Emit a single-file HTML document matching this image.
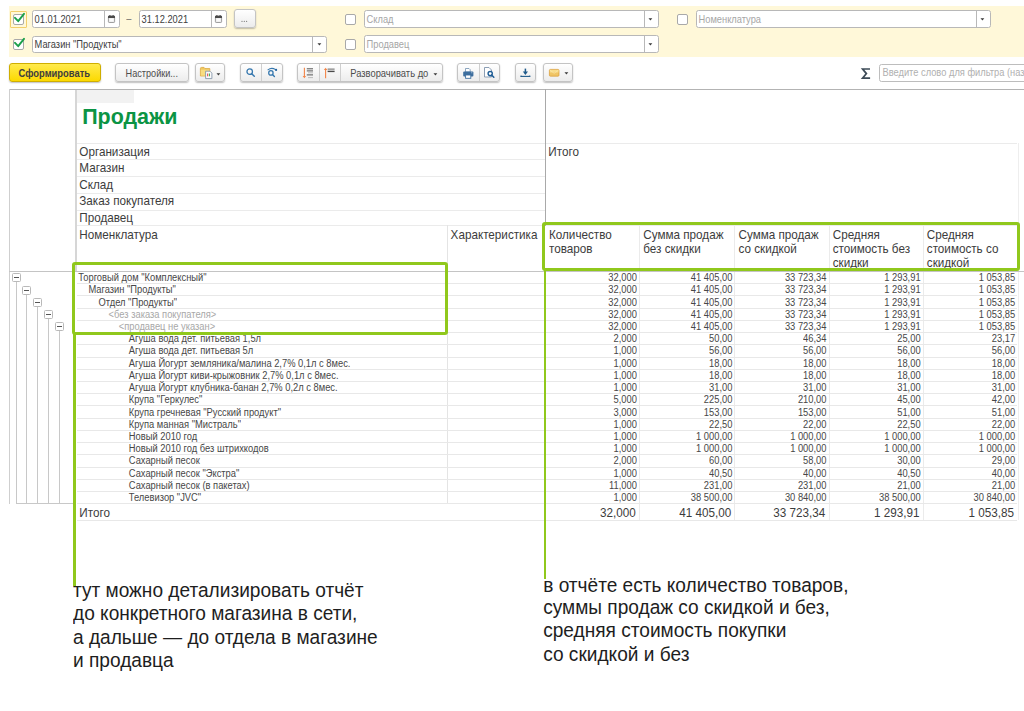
<!DOCTYPE html><html><head><meta charset="utf-8"><style>
html,body{margin:0;padding:0;width:1024px;height:711px;overflow:hidden;background:#fff;font-family:"Liberation Sans", sans-serif;}
.btn{position:absolute;box-sizing:border-box;border:1px solid #c4c4c4;border-radius:3px;background:linear-gradient(#ffffff,#ececec);box-shadow:0 1px 1.5px rgba(0,0,0,0.25);}
.inp{position:absolute;box-sizing:border-box;border:1px solid #b8b8b8;border-radius:2.5px;background:#fff;}
.cb{position:absolute;box-sizing:border-box;border:1px solid #a9a9a9;border-radius:2px;background:#fff;}
svg{position:absolute;overflow:visible}
</style></head><body>
<div style="position:absolute;left:9px;top:5.5px;width:1015px;height:51.5px;background:#fff8d9"></div>
<div style="position:absolute;left:10px;top:11px;width:17px;height:16.5px;box-sizing:border-box;border:1px solid #f2cf6b;border-radius:1px"></div>
<div class="cb" style="left:13px;top:13.5px;width:11px;height:11px"></div>
<svg style="left:14.2px;top:12.8px" width="12" height="10" viewBox="0 0 12 10"><path d="M1 4.8 L4.2 8.2 L10 0.8" fill="none" stroke="#1aa04a" stroke-width="1.9" stroke-linecap="round" stroke-linejoin="round"/></svg>
<div class="cb" style="left:13px;top:38.5px;width:11px;height:11px"></div>
<svg style="left:14.2px;top:37.8px" width="12" height="10" viewBox="0 0 12 10"><path d="M1 4.8 L4.2 8.2 L10 0.8" fill="none" stroke="#1aa04a" stroke-width="1.9" stroke-linecap="round" stroke-linejoin="round"/></svg>
<div class="inp" style="left:32px;top:10px;width:87.5px;height:18px"></div>
<div style="position:absolute;left:103.6px;top:10.5px;width:1.0px;height:17.0px;background:#b8b8b8"></div>
<svg style="left:107.95px;top:15px" width="7" height="8" viewBox="0 0 7 8"><rect x="0.4" y="1.2" width="6.2" height="6.3" rx="0.8" fill="#e2e2e2" stroke="#8a8a8a" stroke-width="0.8"/><rect x="1.3" y="3.4" width="4.4" height="3.2" fill="#fafafa"/><rect x="0" y="0.8" width="7" height="2.2" rx="0.6" fill="#4a4a4a"/><rect x="1.4" y="0" width="1" height="1.2" fill="#4a4a4a"/><rect x="4.6" y="0" width="1" height="1.2" fill="#4a4a4a"/></svg>
<div style="position:absolute;left:34.60px;top:15.93px;font-size:9.3px;line-height:1;color:#404040;font-weight:400;white-space:pre;transform:scaleY(1.2);transform-origin:0 7.87px;">01.01.2021</div>
<div style="position:absolute;left:126.20px;top:14.73px;font-size:9.3px;line-height:1;color:#555;font-weight:400;white-space:pre;transform:scaleY(1.07);transform-origin:0 7.87px;">–</div>
<div class="inp" style="left:139px;top:10px;width:87.5px;height:18px"></div>
<div style="position:absolute;left:211px;top:10.5px;width:1px;height:17.0px;background:#b8b8b8"></div>
<svg style="left:215.15px;top:15px" width="7" height="8" viewBox="0 0 7 8"><rect x="0.4" y="1.2" width="6.2" height="6.3" rx="0.8" fill="#e2e2e2" stroke="#8a8a8a" stroke-width="0.8"/><rect x="1.3" y="3.4" width="4.4" height="3.2" fill="#fafafa"/><rect x="0" y="0.8" width="7" height="2.2" rx="0.6" fill="#4a4a4a"/><rect x="1.4" y="0" width="1" height="1.2" fill="#4a4a4a"/><rect x="4.6" y="0" width="1" height="1.2" fill="#4a4a4a"/></svg>
<div style="position:absolute;left:141.60px;top:15.93px;font-size:9.3px;line-height:1;color:#404040;font-weight:400;white-space:pre;transform:scaleY(1.2);transform-origin:0 7.87px;">31.12.2021</div>
<div class="btn" style="left:234px;top:9.2px;width:21.5px;height:18.8px"></div>
<svg style="left:241px;top:20px" width="7" height="3" viewBox="0 0 7 3"><circle cx="1" cy="1.3" r="0.65" fill="#777"/><circle cx="3.3" cy="1.3" r="0.65" fill="#777"/><circle cx="5.6" cy="1.3" r="0.65" fill="#777"/></svg>
<div class="inp" style="left:32px;top:35.5px;width:295px;height:17.5px"></div>
<div style="position:absolute;left:311.5px;top:36.0px;width:1.0px;height:16.5px;background:#b8b8b8"></div>
<svg style="left:316.65px;top:43.05px" width="5" height="3" viewBox="0 0 5 3"><path d="M0.5 0.3 L4.3 0.3 L2.4 2.4 Z" fill="#3a3a3a"/></svg>
<div style="position:absolute;left:34.60px;top:40.93px;font-size:9.3px;line-height:1;color:#404040;font-weight:400;white-space:pre;transform:scaleY(1.2);transform-origin:0 7.87px;">Магазин &quot;Продукты&quot;</div>
<div class="cb" style="left:345px;top:14px;width:11px;height:11px"></div>
<div class="inp" style="left:364px;top:10.3px;width:294.5px;height:17.7px"></div>
<div style="position:absolute;left:643.5px;top:10.8px;width:1.0px;height:16.7px;background:#b8b8b8"></div>
<svg style="left:648.4px;top:17.95px" width="5" height="3" viewBox="0 0 5 3"><path d="M0.5 0.3 L4.3 0.3 L2.4 2.4 Z" fill="#3a3a3a"/></svg>
<div style="position:absolute;left:366.60px;top:15.73px;font-size:9.3px;line-height:1;color:#a6a6a6;font-weight:400;white-space:pre;transform:scaleY(1.2);transform-origin:0 7.87px;">Склад</div>
<div class="cb" style="left:345px;top:39px;width:11px;height:11px"></div>
<div class="inp" style="left:364px;top:35.3px;width:294.5px;height:17.700000000000003px"></div>
<div style="position:absolute;left:643.5px;top:35.8px;width:1.0px;height:16.700000000000003px;background:#b8b8b8"></div>
<svg style="left:648.4px;top:42.949999999999996px" width="5" height="3" viewBox="0 0 5 3"><path d="M0.5 0.3 L4.3 0.3 L2.4 2.4 Z" fill="#3a3a3a"/></svg>
<div style="position:absolute;left:366.60px;top:40.73px;font-size:9.3px;line-height:1;color:#a6a6a6;font-weight:400;white-space:pre;transform:scaleY(1.2);transform-origin:0 7.87px;">Продавец</div>
<div class="cb" style="left:677px;top:14px;width:11px;height:11px"></div>
<div class="inp" style="left:696px;top:10.3px;width:294.5px;height:17.7px"></div>
<div style="position:absolute;left:975.5px;top:10.8px;width:1.0px;height:16.7px;background:#b8b8b8"></div>
<svg style="left:980.4px;top:17.95px" width="5" height="3" viewBox="0 0 5 3"><path d="M0.5 0.3 L4.3 0.3 L2.4 2.4 Z" fill="#3a3a3a"/></svg>
<div style="position:absolute;left:698.60px;top:15.73px;font-size:9.3px;line-height:1;color:#a6a6a6;font-weight:400;white-space:pre;transform:scaleY(1.2);transform-origin:0 7.87px;">Номенклатура</div>
<div style="position:absolute;left:9px;top:63.3px;width:92px;height:18.5px;box-sizing:border-box;border:1px solid #cfae00;border-radius:3px;background:linear-gradient(#ffea4d,#fcd900);box-shadow:0 1px 1.5px rgba(0,0,0,0.25)"></div>
<div style="position:absolute;left:18.60px;top:70.16px;font-size:9.38px;line-height:1;color:#3d3d3d;font-weight:700;white-space:pre;transform:scaleY(1.12);transform-origin:0 7.94px;">Сформировать</div>
<div class="btn" style="left:115.3px;top:63.3px;width:73.5px;height:18.5px"></div>
<div style="position:absolute;left:125.60px;top:69.75px;font-size:9.15px;line-height:1;color:#4d4d4d;font-weight:400;white-space:pre;transform:scaleY(1.2);transform-origin:0 7.75px;">Настройки...</div>
<div class="btn" style="left:195.3px;top:63.3px;width:29.5px;height:18.5px"></div>
<svg style="left:199.8px;top:66.8px" width="13" height="13" viewBox="0 0 13 13">
<path d="M0.4 1.6 Q0.4 0.4 1.6 0.4 L4 0.4 L5 1.6 L9.8 1.6 L9.8 9 L0.4 9 Z" fill="#f0c75e" stroke="#dba73f" stroke-width="0.8"/>
<rect x="0.8" y="2.6" width="8.6" height="6" fill="#f8dc80"/>
<path d="M5.6 4.2 L10 4.2 L11.9 6.1 L11.9 11.6 L5.6 11.6 Z" fill="#fbfbfb" stroke="#8797aa" stroke-width="0.9" stroke-linejoin="round"/>
<rect x="7.1" y="6.5" width="1.1" height="2.8" fill="#e65050"/><rect x="8.9" y="6.5" width="1.1" height="2.8" fill="#4fb45a"/>
</svg>
<svg style="left:216px;top:72.5px" width="5" height="3" viewBox="0 0 5 3"><path d="M0.5 0.3 L4.3 0.3 L2.4 2.4 Z" fill="#3a3a3a"/></svg>
<div class="btn" style="left:240.3px;top:63.3px;width:42.5px;height:18.5px"></div>
<div style="position:absolute;left:261.3px;top:63.8px;width:1.0px;height:17.5px;background:#cfcfcf"></div>
<svg style="left:246px;top:68px" width="10" height="10" viewBox="0 0 10 10"><circle cx="3.7" cy="3.7" r="2.75" fill="none" stroke="#3577ae" stroke-width="1.25"/><path d="M5.7 5.7 L8.3 8.3" stroke="#3577ae" stroke-width="1.45" stroke-linecap="round"/></svg>
<svg style="left:267px;top:67px" width="11" height="11" viewBox="0 0 11 11"><path d="M0.9 2.8 Q4.6 0.1 8.6 2.6" fill="none" stroke="#3577ae" stroke-width="1.05" stroke-linecap="round"/><circle cx="9.1" cy="2.9" r="1.1" fill="#2565a0"/><circle cx="3.9" cy="5.9" r="2.2" fill="none" stroke="#3577ae" stroke-width="1.25"/><path d="M5.5 7.5 L7.4 9.4" stroke="#3577ae" stroke-width="1.4" stroke-linecap="round"/></svg>
<div class="btn" style="left:297.3px;top:63.3px;width:145.3px;height:18.5px"></div>
<div style="position:absolute;left:319.4px;top:63.8px;width:1.0px;height:17.5px;background:#cfcfcf"></div>
<div style="position:absolute;left:340.4px;top:63.8px;width:1.0px;height:17.5px;background:#cfcfcf"></div>
<svg style="left:302px;top:66.5px" width="12" height="12" viewBox="0 0 12 12"><path d="M2.4 0.7 L2.4 10" stroke="#f28447" stroke-width="1.1"/><path d="M0.7 8.9 L2.4 11.2 L4.1 8.9 Z" fill="#f28447"/><rect x="4.8" y="1.3" width="6.2" height="1" fill="#555"/><rect x="4.8" y="3.4" width="6.2" height="1" fill="#555"/><rect x="6" y="5.3" width="5" height="1" fill="#bbb"/><rect x="4.8" y="7.4" width="6.2" height="1" fill="#555"/><rect x="6" y="10.1" width="5" height="1" fill="#bbb"/></svg>
<svg style="left:322.5px;top:66.5px" width="12" height="12" viewBox="0 0 12 12"><path d="M2.6 2 L2.6 11.2" stroke="#f28447" stroke-width="1.1"/><path d="M0.9 3.1 L2.6 0.8 L4.3 3.1 Z" fill="#f28447"/><rect x="4.6" y="1.6" width="7" height="1" fill="#666"/><rect x="4.6" y="3.7" width="7" height="1.4" fill="#4a4a4a"/></svg>
<div style="position:absolute;left:350.20px;top:69.56px;font-size:9.38px;line-height:1;color:#4d4d4d;font-weight:400;white-space:pre;transform:scaleY(1.2);transform-origin:0 7.94px;">Разворачивать до</div>
<svg style="left:432.5px;top:72.6px" width="5" height="3" viewBox="0 0 5 3"><path d="M0.5 0.3 L4.3 0.3 L2.4 2.4 Z" fill="#3a3a3a"/></svg>
<div class="btn" style="left:457.2px;top:63.3px;width:43.2px;height:18.5px"></div>
<div style="position:absolute;left:479.2px;top:63.8px;width:1.0px;height:17.5px;background:#cfcfcf"></div>
<svg style="left:462.8px;top:67.6px" width="11" height="11" viewBox="0 0 11 11"><path d="M2.5 0.5 L6 0.5 L7.2 1.7 L7.2 4 L2.5 4 Z" fill="#fff" stroke="#6f8fb0" stroke-width="0.8"/><rect x="0.2" y="3.5" width="10.2" height="5" rx="1" fill="#3d6e9e"/><rect x="8" y="4.4" width="1.4" height="0.8" fill="#a9c2da"/><rect x="2.6" y="7" width="5.2" height="3.3" fill="#fff" stroke="#3d6e9e" stroke-width="0.9"/></svg>
<svg style="left:484px;top:67.2px" width="11" height="11" viewBox="0 0 11 11"><path d="M0.5 0.5 L5 0.5 L7.5 3 L7.5 10 L0.5 10 Z" fill="#fff" stroke="#7f94ad" stroke-width="0.9"/><circle cx="6.2" cy="6.6" r="2.1" fill="#fff" stroke="#1f5d96" stroke-width="1.4"/><path d="M7.6 8 L9.8 10.2" stroke="#1f5d96" stroke-width="1.6" stroke-linecap="round"/></svg>
<div class="btn" style="left:515.4px;top:63.3px;width:20.8px;height:18.5px"></div>
<svg style="left:520px;top:67.6px" width="11" height="10" viewBox="0 0 11 10"><path d="M5.4 0.6 L5.4 4.8" stroke="#1f5a8a" stroke-width="1.5"/><path d="M2.8 3.6 L5.4 6.9 L8 3.6 Z" fill="#1f5a8a"/><path d="M1 8.4 L9.8 8.4" stroke="#1f5a8a" stroke-width="1.1"/><circle cx="1" cy="8.2" r="0.8" fill="#1f5a8a"/><circle cx="9.8" cy="8.2" r="0.8" fill="#1f5a8a"/></svg>
<div class="btn" style="left:543.4px;top:63.3px;width:29.3px;height:18.5px"></div>
<svg style="left:548.6px;top:69px" width="11" height="8" viewBox="0 0 11 8"><rect x="0.4" y="0.4" width="9.6" height="6.8" rx="1" fill="#f0c565" stroke="#d89b36" stroke-width="0.7"/><rect x="0.9" y="0.9" width="8.6" height="2.6" fill="#f8dc8a"/><path d="M1 1.2 L5.2 4.3 L9.4 1.2" fill="none" stroke="#fbe7b0" stroke-width="0.6"/></svg>
<svg style="left:563.9px;top:72.4px" width="5" height="3" viewBox="0 0 5 3"><path d="M0.5 0.3 L4.3 0.3 L2.4 2.4 Z" fill="#3a3a3a"/></svg>
<svg style="left:861px;top:67px" width="10" height="13" viewBox="0 0 10 13"><path d="M9 2 L1.6 2 L5.4 6.6 L1.6 11.1 L9.1 11.1" fill="none" stroke="#3d4b57" stroke-width="1.7" stroke-linejoin="miter"/></svg>
<div class="inp" style="left:879.2px;top:64px;width:160px;height:17.5px;border-color:#bdbdbd"></div>
<div style="position:absolute;left:882.50px;top:69.03px;font-size:9.3px;line-height:1;color:#b0b0b0;font-weight:400;white-space:pre;transform:scaleY(1.2);transform-origin:0 7.87px;">Введите слово для фильтра (наз</div>
<div style="position:absolute;left:9px;top:89px;width:1015px;height:1px;background:#b3b3b3"></div>
<div style="position:absolute;left:9px;top:89px;width:1px;height:415px;background:#cfcfcf"></div>
<div style="position:absolute;left:75.2px;top:90px;width:1.5999999999999943px;height:181px;background:#d6d6d6"></div>
<div style="position:absolute;left:76.8px;top:90px;width:57.39999999999999px;height:12.799999999999997px;background:#f2f2f2"></div>
<div style="position:absolute;left:82.20px;top:107.04px;font-size:21.45px;line-height:1;color:#0b9444;font-weight:700;white-space:pre;transform:scaleY(1.06);transform-origin:0 18.16px;">Продажи</div>
<div style="position:absolute;left:76.8px;top:142.6px;width:940.7px;height:1.0px;background:#ebebeb"></div>
<div style="position:absolute;left:76.8px;top:225.4px;width:940.7px;height:1.0px;background:#ebebeb"></div>
<div style="position:absolute;left:76.8px;top:159.3px;width:468.7px;height:1.0px;background:#ebebeb"></div>
<div style="position:absolute;left:76.8px;top:176.2px;width:468.7px;height:1.0px;background:#ebebeb"></div>
<div style="position:absolute;left:76.8px;top:192.6px;width:468.7px;height:1.0px;background:#ebebeb"></div>
<div style="position:absolute;left:76.8px;top:209.5px;width:468.7px;height:1.0px;background:#ebebeb"></div>
<div style="position:absolute;left:545px;top:89px;width:1px;height:137px;background:#a9a9a9"></div>
<div style="position:absolute;left:1017.5px;top:142.6px;width:1.0px;height:377.9px;background:#eeeeee"></div>
<div style="position:absolute;left:79.30px;top:145.80px;font-size:11.7px;line-height:1;color:#3c3c3c;font-weight:400;white-space:pre;transform:scaleY(1.07);transform-origin:0 9.90px;">Организация</div>
<div style="position:absolute;left:79.30px;top:162.35px;font-size:11.7px;line-height:1;color:#3c3c3c;font-weight:400;white-space:pre;transform:scaleY(1.07);transform-origin:0 9.90px;">Магазин</div>
<div style="position:absolute;left:79.30px;top:178.90px;font-size:11.7px;line-height:1;color:#3c3c3c;font-weight:400;white-space:pre;transform:scaleY(1.07);transform-origin:0 9.90px;">Склад</div>
<div style="position:absolute;left:79.30px;top:195.45px;font-size:11.7px;line-height:1;color:#3c3c3c;font-weight:400;white-space:pre;transform:scaleY(1.07);transform-origin:0 9.90px;">Заказ покупателя</div>
<div style="position:absolute;left:79.30px;top:212.00px;font-size:11.7px;line-height:1;color:#3c3c3c;font-weight:400;white-space:pre;transform:scaleY(1.07);transform-origin:0 9.90px;">Продавец</div>
<div style="position:absolute;left:79.30px;top:228.55px;font-size:11.7px;line-height:1;color:#3c3c3c;font-weight:400;white-space:pre;transform:scaleY(1.07);transform-origin:0 9.90px;">Номенклатура</div>
<div style="position:absolute;left:548.30px;top:145.80px;font-size:11.7px;line-height:1;color:#3c3c3c;font-weight:400;white-space:pre;transform:scaleY(1.07);transform-origin:0 9.90px;">Итого</div>
<div style="position:absolute;left:447.3px;top:225.4px;width:1.0px;height:278.6px;background:#e4e4e4"></div>
<div style="position:absolute;left:450.60px;top:229.00px;font-size:11.7px;line-height:1;color:#3c3c3c;font-weight:400;white-space:pre;transform:scaleY(1.07);transform-origin:0 9.90px;">Характеристика</div>
<div style="position:absolute;left:549.00px;top:228.50px;font-size:11.7px;line-height:1;color:#3c3c3c;font-weight:400;white-space:pre;transform:scaleY(1.07);transform-origin:0 9.90px;">Количество</div>
<div style="position:absolute;left:549.00px;top:242.60px;font-size:11.7px;line-height:1;color:#3c3c3c;font-weight:400;white-space:pre;transform:scaleY(1.07);transform-origin:0 9.90px;">товаров</div>
<div style="position:absolute;left:643.30px;top:228.50px;font-size:11.7px;line-height:1;color:#3c3c3c;font-weight:400;white-space:pre;transform:scaleY(1.07);transform-origin:0 9.90px;">Сумма продаж</div>
<div style="position:absolute;left:643.30px;top:242.60px;font-size:11.7px;line-height:1;color:#3c3c3c;font-weight:400;white-space:pre;transform:scaleY(1.07);transform-origin:0 9.90px;">без скидки</div>
<div style="position:absolute;left:738.50px;top:228.50px;font-size:11.7px;line-height:1;color:#3c3c3c;font-weight:400;white-space:pre;transform:scaleY(1.07);transform-origin:0 9.90px;">Сумма продаж</div>
<div style="position:absolute;left:738.50px;top:242.60px;font-size:11.7px;line-height:1;color:#3c3c3c;font-weight:400;white-space:pre;transform:scaleY(1.07);transform-origin:0 9.90px;">со скидкой</div>
<div style="position:absolute;left:832.70px;top:228.50px;font-size:11.7px;line-height:1;color:#3c3c3c;font-weight:400;white-space:pre;transform:scaleY(1.07);transform-origin:0 9.90px;">Средняя</div>
<div style="position:absolute;left:832.70px;top:242.60px;font-size:11.7px;line-height:1;color:#3c3c3c;font-weight:400;white-space:pre;transform:scaleY(1.07);transform-origin:0 9.90px;">стоимость без</div>
<div style="position:absolute;left:832.70px;top:256.70px;font-size:11.7px;line-height:1;color:#3c3c3c;font-weight:400;white-space:pre;transform:scaleY(1.07);transform-origin:0 9.90px;">скидки</div>
<div style="position:absolute;left:926.80px;top:228.50px;font-size:11.7px;line-height:1;color:#3c3c3c;font-weight:400;white-space:pre;transform:scaleY(1.07);transform-origin:0 9.90px;">Средняя</div>
<div style="position:absolute;left:926.80px;top:242.60px;font-size:11.7px;line-height:1;color:#3c3c3c;font-weight:400;white-space:pre;transform:scaleY(1.07);transform-origin:0 9.90px;">стоимость со</div>
<div style="position:absolute;left:926.80px;top:256.70px;font-size:11.7px;line-height:1;color:#3c3c3c;font-weight:400;white-space:pre;transform:scaleY(1.07);transform-origin:0 9.90px;">скидкой</div>
<div style="position:absolute;left:639px;top:225.4px;width:1px;height:295.1px;background:#ebebeb"></div>
<div style="position:absolute;left:734px;top:225.4px;width:1px;height:295.1px;background:#ebebeb"></div>
<div style="position:absolute;left:829px;top:225.4px;width:1px;height:295.1px;background:#ebebeb"></div>
<div style="position:absolute;left:923px;top:225.4px;width:1px;height:295.1px;background:#ebebeb"></div>
<div style="position:absolute;left:9px;top:271px;width:1015px;height:1px;background:#c4c4c4"></div>
<div style="position:absolute;left:78.30px;top:274.09px;font-size:9.35px;line-height:1;color:#474747;font-weight:400;white-space:pre;transform:scaleY(1.07);transform-origin:0 7.91px;">Торговый дом &quot;Комплексный&quot;</div>
<div style="position:absolute;left:236.90px;width:400px;text-align:right;top:274.09px;font-size:9.35px;line-height:1;color:#474747;font-weight:400;white-space:pre;transform:scaleY(1.07);transform-origin:0 7.91px;">32,000</div>
<div style="position:absolute;left:332.40px;width:400px;text-align:right;top:274.09px;font-size:9.35px;line-height:1;color:#474747;font-weight:400;white-space:pre;transform:scaleY(1.07);transform-origin:0 7.91px;">41 405,00</div>
<div style="position:absolute;left:426.50px;width:400px;text-align:right;top:274.09px;font-size:9.35px;line-height:1;color:#474747;font-weight:400;white-space:pre;transform:scaleY(1.07);transform-origin:0 7.91px;">33 723,34</div>
<div style="position:absolute;left:520.60px;width:400px;text-align:right;top:274.09px;font-size:9.35px;line-height:1;color:#474747;font-weight:400;white-space:pre;transform:scaleY(1.07);transform-origin:0 7.91px;">1 293,91</div>
<div style="position:absolute;left:615.20px;width:400px;text-align:right;top:274.09px;font-size:9.35px;line-height:1;color:#474747;font-weight:400;white-space:pre;transform:scaleY(1.07);transform-origin:0 7.91px;">1 053,85</div>
<div style="position:absolute;left:76.8px;top:283.2263157894737px;width:940.7px;height:1.0px;background:#e8e8e8"></div>
<div style="position:absolute;left:88.40px;top:286.31px;font-size:9.35px;line-height:1;color:#474747;font-weight:400;white-space:pre;transform:scaleY(1.07);transform-origin:0 7.91px;">Магазин &quot;Продукты&quot;</div>
<div style="position:absolute;left:236.90px;width:400px;text-align:right;top:286.31px;font-size:9.35px;line-height:1;color:#474747;font-weight:400;white-space:pre;transform:scaleY(1.07);transform-origin:0 7.91px;">32,000</div>
<div style="position:absolute;left:332.40px;width:400px;text-align:right;top:286.31px;font-size:9.35px;line-height:1;color:#474747;font-weight:400;white-space:pre;transform:scaleY(1.07);transform-origin:0 7.91px;">41 405,00</div>
<div style="position:absolute;left:426.50px;width:400px;text-align:right;top:286.31px;font-size:9.35px;line-height:1;color:#474747;font-weight:400;white-space:pre;transform:scaleY(1.07);transform-origin:0 7.91px;">33 723,34</div>
<div style="position:absolute;left:520.60px;width:400px;text-align:right;top:286.31px;font-size:9.35px;line-height:1;color:#474747;font-weight:400;white-space:pre;transform:scaleY(1.07);transform-origin:0 7.91px;">1 293,91</div>
<div style="position:absolute;left:615.20px;width:400px;text-align:right;top:286.31px;font-size:9.35px;line-height:1;color:#474747;font-weight:400;white-space:pre;transform:scaleY(1.07);transform-origin:0 7.91px;">1 053,85</div>
<div style="position:absolute;left:76.8px;top:295.4526315789474px;width:940.7px;height:1.0px;background:#e8e8e8"></div>
<div style="position:absolute;left:98.50px;top:298.54px;font-size:9.35px;line-height:1;color:#474747;font-weight:400;white-space:pre;transform:scaleY(1.07);transform-origin:0 7.91px;">Отдел &quot;Продукты&quot;</div>
<div style="position:absolute;left:236.90px;width:400px;text-align:right;top:298.54px;font-size:9.35px;line-height:1;color:#474747;font-weight:400;white-space:pre;transform:scaleY(1.07);transform-origin:0 7.91px;">32,000</div>
<div style="position:absolute;left:332.40px;width:400px;text-align:right;top:298.54px;font-size:9.35px;line-height:1;color:#474747;font-weight:400;white-space:pre;transform:scaleY(1.07);transform-origin:0 7.91px;">41 405,00</div>
<div style="position:absolute;left:426.50px;width:400px;text-align:right;top:298.54px;font-size:9.35px;line-height:1;color:#474747;font-weight:400;white-space:pre;transform:scaleY(1.07);transform-origin:0 7.91px;">33 723,34</div>
<div style="position:absolute;left:520.60px;width:400px;text-align:right;top:298.54px;font-size:9.35px;line-height:1;color:#474747;font-weight:400;white-space:pre;transform:scaleY(1.07);transform-origin:0 7.91px;">1 293,91</div>
<div style="position:absolute;left:615.20px;width:400px;text-align:right;top:298.54px;font-size:9.35px;line-height:1;color:#474747;font-weight:400;white-space:pre;transform:scaleY(1.07);transform-origin:0 7.91px;">1 053,85</div>
<div style="position:absolute;left:76.8px;top:307.67894736842106px;width:940.7px;height:1.0px;background:#e8e8e8"></div>
<div style="position:absolute;left:108.60px;top:310.76px;font-size:9.35px;line-height:1;color:#a8a8a8;font-weight:400;white-space:pre;transform:scaleY(1.07);transform-origin:0 7.91px;">&lt;без заказа покупателя&gt;</div>
<div style="position:absolute;left:236.90px;width:400px;text-align:right;top:310.76px;font-size:9.35px;line-height:1;color:#474747;font-weight:400;white-space:pre;transform:scaleY(1.07);transform-origin:0 7.91px;">32,000</div>
<div style="position:absolute;left:332.40px;width:400px;text-align:right;top:310.76px;font-size:9.35px;line-height:1;color:#474747;font-weight:400;white-space:pre;transform:scaleY(1.07);transform-origin:0 7.91px;">41 405,00</div>
<div style="position:absolute;left:426.50px;width:400px;text-align:right;top:310.76px;font-size:9.35px;line-height:1;color:#474747;font-weight:400;white-space:pre;transform:scaleY(1.07);transform-origin:0 7.91px;">33 723,34</div>
<div style="position:absolute;left:520.60px;width:400px;text-align:right;top:310.76px;font-size:9.35px;line-height:1;color:#474747;font-weight:400;white-space:pre;transform:scaleY(1.07);transform-origin:0 7.91px;">1 293,91</div>
<div style="position:absolute;left:615.20px;width:400px;text-align:right;top:310.76px;font-size:9.35px;line-height:1;color:#474747;font-weight:400;white-space:pre;transform:scaleY(1.07);transform-origin:0 7.91px;">1 053,85</div>
<div style="position:absolute;left:76.8px;top:319.90526315789475px;width:940.7px;height:1.0px;background:#e8e8e8"></div>
<div style="position:absolute;left:118.70px;top:322.99px;font-size:9.35px;line-height:1;color:#a8a8a8;font-weight:400;white-space:pre;transform:scaleY(1.07);transform-origin:0 7.91px;">&lt;продавец не указан&gt;</div>
<div style="position:absolute;left:236.90px;width:400px;text-align:right;top:322.99px;font-size:9.35px;line-height:1;color:#474747;font-weight:400;white-space:pre;transform:scaleY(1.07);transform-origin:0 7.91px;">32,000</div>
<div style="position:absolute;left:332.40px;width:400px;text-align:right;top:322.99px;font-size:9.35px;line-height:1;color:#474747;font-weight:400;white-space:pre;transform:scaleY(1.07);transform-origin:0 7.91px;">41 405,00</div>
<div style="position:absolute;left:426.50px;width:400px;text-align:right;top:322.99px;font-size:9.35px;line-height:1;color:#474747;font-weight:400;white-space:pre;transform:scaleY(1.07);transform-origin:0 7.91px;">33 723,34</div>
<div style="position:absolute;left:520.60px;width:400px;text-align:right;top:322.99px;font-size:9.35px;line-height:1;color:#474747;font-weight:400;white-space:pre;transform:scaleY(1.07);transform-origin:0 7.91px;">1 293,91</div>
<div style="position:absolute;left:615.20px;width:400px;text-align:right;top:322.99px;font-size:9.35px;line-height:1;color:#474747;font-weight:400;white-space:pre;transform:scaleY(1.07);transform-origin:0 7.91px;">1 053,85</div>
<div style="position:absolute;left:76.8px;top:332.13157894736844px;width:940.7px;height:1.0px;background:#e8e8e8"></div>
<div style="position:absolute;left:128.80px;top:335.22px;font-size:9.35px;line-height:1;color:#474747;font-weight:400;white-space:pre;transform:scaleY(1.07);transform-origin:0 7.91px;">Агуша вода дет. питьевая 1,5л</div>
<div style="position:absolute;left:236.90px;width:400px;text-align:right;top:335.22px;font-size:9.35px;line-height:1;color:#474747;font-weight:400;white-space:pre;transform:scaleY(1.07);transform-origin:0 7.91px;">2,000</div>
<div style="position:absolute;left:332.40px;width:400px;text-align:right;top:335.22px;font-size:9.35px;line-height:1;color:#474747;font-weight:400;white-space:pre;transform:scaleY(1.07);transform-origin:0 7.91px;">50,00</div>
<div style="position:absolute;left:426.50px;width:400px;text-align:right;top:335.22px;font-size:9.35px;line-height:1;color:#474747;font-weight:400;white-space:pre;transform:scaleY(1.07);transform-origin:0 7.91px;">46,34</div>
<div style="position:absolute;left:520.60px;width:400px;text-align:right;top:335.22px;font-size:9.35px;line-height:1;color:#474747;font-weight:400;white-space:pre;transform:scaleY(1.07);transform-origin:0 7.91px;">25,00</div>
<div style="position:absolute;left:615.20px;width:400px;text-align:right;top:335.22px;font-size:9.35px;line-height:1;color:#474747;font-weight:400;white-space:pre;transform:scaleY(1.07);transform-origin:0 7.91px;">23,17</div>
<div style="position:absolute;left:76.8px;top:344.3578947368421px;width:940.7px;height:1.0px;background:#e8e8e8"></div>
<div style="position:absolute;left:128.80px;top:347.44px;font-size:9.35px;line-height:1;color:#474747;font-weight:400;white-space:pre;transform:scaleY(1.07);transform-origin:0 7.91px;">Агуша вода дет. питьевая 5л</div>
<div style="position:absolute;left:236.90px;width:400px;text-align:right;top:347.44px;font-size:9.35px;line-height:1;color:#474747;font-weight:400;white-space:pre;transform:scaleY(1.07);transform-origin:0 7.91px;">1,000</div>
<div style="position:absolute;left:332.40px;width:400px;text-align:right;top:347.44px;font-size:9.35px;line-height:1;color:#474747;font-weight:400;white-space:pre;transform:scaleY(1.07);transform-origin:0 7.91px;">56,00</div>
<div style="position:absolute;left:426.50px;width:400px;text-align:right;top:347.44px;font-size:9.35px;line-height:1;color:#474747;font-weight:400;white-space:pre;transform:scaleY(1.07);transform-origin:0 7.91px;">56,00</div>
<div style="position:absolute;left:520.60px;width:400px;text-align:right;top:347.44px;font-size:9.35px;line-height:1;color:#474747;font-weight:400;white-space:pre;transform:scaleY(1.07);transform-origin:0 7.91px;">56,00</div>
<div style="position:absolute;left:615.20px;width:400px;text-align:right;top:347.44px;font-size:9.35px;line-height:1;color:#474747;font-weight:400;white-space:pre;transform:scaleY(1.07);transform-origin:0 7.91px;">56,00</div>
<div style="position:absolute;left:76.8px;top:356.5842105263158px;width:940.7px;height:1.0px;background:#e8e8e8"></div>
<div style="position:absolute;left:128.80px;top:359.67px;font-size:9.35px;line-height:1;color:#474747;font-weight:400;white-space:pre;transform:scaleY(1.07);transform-origin:0 7.91px;">Агуша Йогурт земляника/малина 2,7% 0,1л с 8мес.</div>
<div style="position:absolute;left:236.90px;width:400px;text-align:right;top:359.67px;font-size:9.35px;line-height:1;color:#474747;font-weight:400;white-space:pre;transform:scaleY(1.07);transform-origin:0 7.91px;">1,000</div>
<div style="position:absolute;left:332.40px;width:400px;text-align:right;top:359.67px;font-size:9.35px;line-height:1;color:#474747;font-weight:400;white-space:pre;transform:scaleY(1.07);transform-origin:0 7.91px;">18,00</div>
<div style="position:absolute;left:426.50px;width:400px;text-align:right;top:359.67px;font-size:9.35px;line-height:1;color:#474747;font-weight:400;white-space:pre;transform:scaleY(1.07);transform-origin:0 7.91px;">18,00</div>
<div style="position:absolute;left:520.60px;width:400px;text-align:right;top:359.67px;font-size:9.35px;line-height:1;color:#474747;font-weight:400;white-space:pre;transform:scaleY(1.07);transform-origin:0 7.91px;">18,00</div>
<div style="position:absolute;left:615.20px;width:400px;text-align:right;top:359.67px;font-size:9.35px;line-height:1;color:#474747;font-weight:400;white-space:pre;transform:scaleY(1.07);transform-origin:0 7.91px;">18,00</div>
<div style="position:absolute;left:76.8px;top:368.8105263157895px;width:940.7px;height:1.0px;background:#e8e8e8"></div>
<div style="position:absolute;left:128.80px;top:371.90px;font-size:9.35px;line-height:1;color:#474747;font-weight:400;white-space:pre;transform:scaleY(1.07);transform-origin:0 7.91px;">Агуша Йогурт киви-крыжовник 2,7% 0,1л с 8мес.</div>
<div style="position:absolute;left:236.90px;width:400px;text-align:right;top:371.90px;font-size:9.35px;line-height:1;color:#474747;font-weight:400;white-space:pre;transform:scaleY(1.07);transform-origin:0 7.91px;">1,000</div>
<div style="position:absolute;left:332.40px;width:400px;text-align:right;top:371.90px;font-size:9.35px;line-height:1;color:#474747;font-weight:400;white-space:pre;transform:scaleY(1.07);transform-origin:0 7.91px;">18,00</div>
<div style="position:absolute;left:426.50px;width:400px;text-align:right;top:371.90px;font-size:9.35px;line-height:1;color:#474747;font-weight:400;white-space:pre;transform:scaleY(1.07);transform-origin:0 7.91px;">18,00</div>
<div style="position:absolute;left:520.60px;width:400px;text-align:right;top:371.90px;font-size:9.35px;line-height:1;color:#474747;font-weight:400;white-space:pre;transform:scaleY(1.07);transform-origin:0 7.91px;">18,00</div>
<div style="position:absolute;left:615.20px;width:400px;text-align:right;top:371.90px;font-size:9.35px;line-height:1;color:#474747;font-weight:400;white-space:pre;transform:scaleY(1.07);transform-origin:0 7.91px;">18,00</div>
<div style="position:absolute;left:76.8px;top:381.0368421052632px;width:940.7px;height:1.0px;background:#e8e8e8"></div>
<div style="position:absolute;left:128.80px;top:384.12px;font-size:9.35px;line-height:1;color:#474747;font-weight:400;white-space:pre;transform:scaleY(1.07);transform-origin:0 7.91px;">Агуша Йогурт клубника-банан 2,7% 0,2л с 8мес.</div>
<div style="position:absolute;left:236.90px;width:400px;text-align:right;top:384.12px;font-size:9.35px;line-height:1;color:#474747;font-weight:400;white-space:pre;transform:scaleY(1.07);transform-origin:0 7.91px;">1,000</div>
<div style="position:absolute;left:332.40px;width:400px;text-align:right;top:384.12px;font-size:9.35px;line-height:1;color:#474747;font-weight:400;white-space:pre;transform:scaleY(1.07);transform-origin:0 7.91px;">31,00</div>
<div style="position:absolute;left:426.50px;width:400px;text-align:right;top:384.12px;font-size:9.35px;line-height:1;color:#474747;font-weight:400;white-space:pre;transform:scaleY(1.07);transform-origin:0 7.91px;">31,00</div>
<div style="position:absolute;left:520.60px;width:400px;text-align:right;top:384.12px;font-size:9.35px;line-height:1;color:#474747;font-weight:400;white-space:pre;transform:scaleY(1.07);transform-origin:0 7.91px;">31,00</div>
<div style="position:absolute;left:615.20px;width:400px;text-align:right;top:384.12px;font-size:9.35px;line-height:1;color:#474747;font-weight:400;white-space:pre;transform:scaleY(1.07);transform-origin:0 7.91px;">31,00</div>
<div style="position:absolute;left:76.8px;top:393.2631578947369px;width:940.7px;height:1.0px;background:#e8e8e8"></div>
<div style="position:absolute;left:128.80px;top:396.35px;font-size:9.35px;line-height:1;color:#474747;font-weight:400;white-space:pre;transform:scaleY(1.07);transform-origin:0 7.91px;">Крупа &quot;Геркулес&quot;</div>
<div style="position:absolute;left:236.90px;width:400px;text-align:right;top:396.35px;font-size:9.35px;line-height:1;color:#474747;font-weight:400;white-space:pre;transform:scaleY(1.07);transform-origin:0 7.91px;">5,000</div>
<div style="position:absolute;left:332.40px;width:400px;text-align:right;top:396.35px;font-size:9.35px;line-height:1;color:#474747;font-weight:400;white-space:pre;transform:scaleY(1.07);transform-origin:0 7.91px;">225,00</div>
<div style="position:absolute;left:426.50px;width:400px;text-align:right;top:396.35px;font-size:9.35px;line-height:1;color:#474747;font-weight:400;white-space:pre;transform:scaleY(1.07);transform-origin:0 7.91px;">210,00</div>
<div style="position:absolute;left:520.60px;width:400px;text-align:right;top:396.35px;font-size:9.35px;line-height:1;color:#474747;font-weight:400;white-space:pre;transform:scaleY(1.07);transform-origin:0 7.91px;">45,00</div>
<div style="position:absolute;left:615.20px;width:400px;text-align:right;top:396.35px;font-size:9.35px;line-height:1;color:#474747;font-weight:400;white-space:pre;transform:scaleY(1.07);transform-origin:0 7.91px;">42,00</div>
<div style="position:absolute;left:76.8px;top:405.48947368421057px;width:940.7px;height:1.0px;background:#e8e8e8"></div>
<div style="position:absolute;left:128.80px;top:408.57px;font-size:9.35px;line-height:1;color:#474747;font-weight:400;white-space:pre;transform:scaleY(1.07);transform-origin:0 7.91px;">Крупа гречневая &quot;Русский продукт&quot;</div>
<div style="position:absolute;left:236.90px;width:400px;text-align:right;top:408.57px;font-size:9.35px;line-height:1;color:#474747;font-weight:400;white-space:pre;transform:scaleY(1.07);transform-origin:0 7.91px;">3,000</div>
<div style="position:absolute;left:332.40px;width:400px;text-align:right;top:408.57px;font-size:9.35px;line-height:1;color:#474747;font-weight:400;white-space:pre;transform:scaleY(1.07);transform-origin:0 7.91px;">153,00</div>
<div style="position:absolute;left:426.50px;width:400px;text-align:right;top:408.57px;font-size:9.35px;line-height:1;color:#474747;font-weight:400;white-space:pre;transform:scaleY(1.07);transform-origin:0 7.91px;">153,00</div>
<div style="position:absolute;left:520.60px;width:400px;text-align:right;top:408.57px;font-size:9.35px;line-height:1;color:#474747;font-weight:400;white-space:pre;transform:scaleY(1.07);transform-origin:0 7.91px;">51,00</div>
<div style="position:absolute;left:615.20px;width:400px;text-align:right;top:408.57px;font-size:9.35px;line-height:1;color:#474747;font-weight:400;white-space:pre;transform:scaleY(1.07);transform-origin:0 7.91px;">51,00</div>
<div style="position:absolute;left:76.8px;top:417.7157894736842px;width:940.7px;height:1.0px;background:#e8e8e8"></div>
<div style="position:absolute;left:128.80px;top:420.80px;font-size:9.35px;line-height:1;color:#474747;font-weight:400;white-space:pre;transform:scaleY(1.07);transform-origin:0 7.91px;">Крупа манная &quot;Мистраль&quot;</div>
<div style="position:absolute;left:236.90px;width:400px;text-align:right;top:420.80px;font-size:9.35px;line-height:1;color:#474747;font-weight:400;white-space:pre;transform:scaleY(1.07);transform-origin:0 7.91px;">1,000</div>
<div style="position:absolute;left:332.40px;width:400px;text-align:right;top:420.80px;font-size:9.35px;line-height:1;color:#474747;font-weight:400;white-space:pre;transform:scaleY(1.07);transform-origin:0 7.91px;">22,50</div>
<div style="position:absolute;left:426.50px;width:400px;text-align:right;top:420.80px;font-size:9.35px;line-height:1;color:#474747;font-weight:400;white-space:pre;transform:scaleY(1.07);transform-origin:0 7.91px;">22,00</div>
<div style="position:absolute;left:520.60px;width:400px;text-align:right;top:420.80px;font-size:9.35px;line-height:1;color:#474747;font-weight:400;white-space:pre;transform:scaleY(1.07);transform-origin:0 7.91px;">22,50</div>
<div style="position:absolute;left:615.20px;width:400px;text-align:right;top:420.80px;font-size:9.35px;line-height:1;color:#474747;font-weight:400;white-space:pre;transform:scaleY(1.07);transform-origin:0 7.91px;">22,00</div>
<div style="position:absolute;left:76.8px;top:429.9421052631579px;width:940.7px;height:1.0px;background:#e8e8e8"></div>
<div style="position:absolute;left:128.80px;top:433.03px;font-size:9.35px;line-height:1;color:#474747;font-weight:400;white-space:pre;transform:scaleY(1.07);transform-origin:0 7.91px;">Новый 2010 год</div>
<div style="position:absolute;left:236.90px;width:400px;text-align:right;top:433.03px;font-size:9.35px;line-height:1;color:#474747;font-weight:400;white-space:pre;transform:scaleY(1.07);transform-origin:0 7.91px;">1,000</div>
<div style="position:absolute;left:332.40px;width:400px;text-align:right;top:433.03px;font-size:9.35px;line-height:1;color:#474747;font-weight:400;white-space:pre;transform:scaleY(1.07);transform-origin:0 7.91px;">1 000,00</div>
<div style="position:absolute;left:426.50px;width:400px;text-align:right;top:433.03px;font-size:9.35px;line-height:1;color:#474747;font-weight:400;white-space:pre;transform:scaleY(1.07);transform-origin:0 7.91px;">1 000,00</div>
<div style="position:absolute;left:520.60px;width:400px;text-align:right;top:433.03px;font-size:9.35px;line-height:1;color:#474747;font-weight:400;white-space:pre;transform:scaleY(1.07);transform-origin:0 7.91px;">1 000,00</div>
<div style="position:absolute;left:615.20px;width:400px;text-align:right;top:433.03px;font-size:9.35px;line-height:1;color:#474747;font-weight:400;white-space:pre;transform:scaleY(1.07);transform-origin:0 7.91px;">1 000,00</div>
<div style="position:absolute;left:76.8px;top:442.1684210526316px;width:940.7px;height:1.0px;background:#e8e8e8"></div>
<div style="position:absolute;left:128.80px;top:445.25px;font-size:9.35px;line-height:1;color:#474747;font-weight:400;white-space:pre;transform:scaleY(1.07);transform-origin:0 7.91px;">Новый 2010 год без штрихкодов</div>
<div style="position:absolute;left:236.90px;width:400px;text-align:right;top:445.25px;font-size:9.35px;line-height:1;color:#474747;font-weight:400;white-space:pre;transform:scaleY(1.07);transform-origin:0 7.91px;">1,000</div>
<div style="position:absolute;left:332.40px;width:400px;text-align:right;top:445.25px;font-size:9.35px;line-height:1;color:#474747;font-weight:400;white-space:pre;transform:scaleY(1.07);transform-origin:0 7.91px;">1 000,00</div>
<div style="position:absolute;left:426.50px;width:400px;text-align:right;top:445.25px;font-size:9.35px;line-height:1;color:#474747;font-weight:400;white-space:pre;transform:scaleY(1.07);transform-origin:0 7.91px;">1 000,00</div>
<div style="position:absolute;left:520.60px;width:400px;text-align:right;top:445.25px;font-size:9.35px;line-height:1;color:#474747;font-weight:400;white-space:pre;transform:scaleY(1.07);transform-origin:0 7.91px;">1 000,00</div>
<div style="position:absolute;left:615.20px;width:400px;text-align:right;top:445.25px;font-size:9.35px;line-height:1;color:#474747;font-weight:400;white-space:pre;transform:scaleY(1.07);transform-origin:0 7.91px;">1 000,00</div>
<div style="position:absolute;left:76.8px;top:454.39473684210526px;width:940.7px;height:1.0px;background:#e8e8e8"></div>
<div style="position:absolute;left:128.80px;top:457.48px;font-size:9.35px;line-height:1;color:#474747;font-weight:400;white-space:pre;transform:scaleY(1.07);transform-origin:0 7.91px;">Сахарный песок</div>
<div style="position:absolute;left:236.90px;width:400px;text-align:right;top:457.48px;font-size:9.35px;line-height:1;color:#474747;font-weight:400;white-space:pre;transform:scaleY(1.07);transform-origin:0 7.91px;">2,000</div>
<div style="position:absolute;left:332.40px;width:400px;text-align:right;top:457.48px;font-size:9.35px;line-height:1;color:#474747;font-weight:400;white-space:pre;transform:scaleY(1.07);transform-origin:0 7.91px;">60,00</div>
<div style="position:absolute;left:426.50px;width:400px;text-align:right;top:457.48px;font-size:9.35px;line-height:1;color:#474747;font-weight:400;white-space:pre;transform:scaleY(1.07);transform-origin:0 7.91px;">58,00</div>
<div style="position:absolute;left:520.60px;width:400px;text-align:right;top:457.48px;font-size:9.35px;line-height:1;color:#474747;font-weight:400;white-space:pre;transform:scaleY(1.07);transform-origin:0 7.91px;">30,00</div>
<div style="position:absolute;left:615.20px;width:400px;text-align:right;top:457.48px;font-size:9.35px;line-height:1;color:#474747;font-weight:400;white-space:pre;transform:scaleY(1.07);transform-origin:0 7.91px;">29,00</div>
<div style="position:absolute;left:76.8px;top:466.62105263157895px;width:940.7px;height:1.0px;background:#e8e8e8"></div>
<div style="position:absolute;left:128.80px;top:469.71px;font-size:9.35px;line-height:1;color:#474747;font-weight:400;white-space:pre;transform:scaleY(1.07);transform-origin:0 7.91px;">Сахарный песок &quot;Экстра&quot;</div>
<div style="position:absolute;left:236.90px;width:400px;text-align:right;top:469.71px;font-size:9.35px;line-height:1;color:#474747;font-weight:400;white-space:pre;transform:scaleY(1.07);transform-origin:0 7.91px;">1,000</div>
<div style="position:absolute;left:332.40px;width:400px;text-align:right;top:469.71px;font-size:9.35px;line-height:1;color:#474747;font-weight:400;white-space:pre;transform:scaleY(1.07);transform-origin:0 7.91px;">40,50</div>
<div style="position:absolute;left:426.50px;width:400px;text-align:right;top:469.71px;font-size:9.35px;line-height:1;color:#474747;font-weight:400;white-space:pre;transform:scaleY(1.07);transform-origin:0 7.91px;">40,00</div>
<div style="position:absolute;left:520.60px;width:400px;text-align:right;top:469.71px;font-size:9.35px;line-height:1;color:#474747;font-weight:400;white-space:pre;transform:scaleY(1.07);transform-origin:0 7.91px;">40,50</div>
<div style="position:absolute;left:615.20px;width:400px;text-align:right;top:469.71px;font-size:9.35px;line-height:1;color:#474747;font-weight:400;white-space:pre;transform:scaleY(1.07);transform-origin:0 7.91px;">40,00</div>
<div style="position:absolute;left:76.8px;top:478.84736842105264px;width:940.7px;height:1.0px;background:#e8e8e8"></div>
<div style="position:absolute;left:128.80px;top:481.93px;font-size:9.35px;line-height:1;color:#474747;font-weight:400;white-space:pre;transform:scaleY(1.07);transform-origin:0 7.91px;">Сахарный песок (в пакетах)</div>
<div style="position:absolute;left:236.90px;width:400px;text-align:right;top:481.93px;font-size:9.35px;line-height:1;color:#474747;font-weight:400;white-space:pre;transform:scaleY(1.07);transform-origin:0 7.91px;">11,000</div>
<div style="position:absolute;left:332.40px;width:400px;text-align:right;top:481.93px;font-size:9.35px;line-height:1;color:#474747;font-weight:400;white-space:pre;transform:scaleY(1.07);transform-origin:0 7.91px;">231,00</div>
<div style="position:absolute;left:426.50px;width:400px;text-align:right;top:481.93px;font-size:9.35px;line-height:1;color:#474747;font-weight:400;white-space:pre;transform:scaleY(1.07);transform-origin:0 7.91px;">231,00</div>
<div style="position:absolute;left:520.60px;width:400px;text-align:right;top:481.93px;font-size:9.35px;line-height:1;color:#474747;font-weight:400;white-space:pre;transform:scaleY(1.07);transform-origin:0 7.91px;">21,00</div>
<div style="position:absolute;left:615.20px;width:400px;text-align:right;top:481.93px;font-size:9.35px;line-height:1;color:#474747;font-weight:400;white-space:pre;transform:scaleY(1.07);transform-origin:0 7.91px;">21,00</div>
<div style="position:absolute;left:76.8px;top:491.0736842105263px;width:940.7px;height:1.0px;background:#e8e8e8"></div>
<div style="position:absolute;left:128.80px;top:494.16px;font-size:9.35px;line-height:1;color:#474747;font-weight:400;white-space:pre;transform:scaleY(1.07);transform-origin:0 7.91px;">Телевизор &quot;JVC&quot;</div>
<div style="position:absolute;left:236.90px;width:400px;text-align:right;top:494.16px;font-size:9.35px;line-height:1;color:#474747;font-weight:400;white-space:pre;transform:scaleY(1.07);transform-origin:0 7.91px;">1,000</div>
<div style="position:absolute;left:332.40px;width:400px;text-align:right;top:494.16px;font-size:9.35px;line-height:1;color:#474747;font-weight:400;white-space:pre;transform:scaleY(1.07);transform-origin:0 7.91px;">38 500,00</div>
<div style="position:absolute;left:426.50px;width:400px;text-align:right;top:494.16px;font-size:9.35px;line-height:1;color:#474747;font-weight:400;white-space:pre;transform:scaleY(1.07);transform-origin:0 7.91px;">30 840,00</div>
<div style="position:absolute;left:520.60px;width:400px;text-align:right;top:494.16px;font-size:9.35px;line-height:1;color:#474747;font-weight:400;white-space:pre;transform:scaleY(1.07);transform-origin:0 7.91px;">38 500,00</div>
<div style="position:absolute;left:615.20px;width:400px;text-align:right;top:494.16px;font-size:9.35px;line-height:1;color:#474747;font-weight:400;white-space:pre;transform:scaleY(1.07);transform-origin:0 7.91px;">30 840,00</div>
<div style="position:absolute;left:76.8px;top:503.3px;width:940.7px;height:1.0px;background:#e8e8e8"></div>
<div style="position:absolute;left:76.8px;top:520px;width:940.7px;height:1px;background:#e8e8e8"></div>
<div style="position:absolute;left:79.30px;top:506.70px;font-size:11.7px;line-height:1;color:#3c3c3c;font-weight:400;white-space:pre;transform:scaleY(1.07);transform-origin:0 9.90px;">Итого</div>
<div style="position:absolute;left:235.70px;width:400px;text-align:right;top:506.70px;font-size:11.7px;line-height:1;color:#3c3c3c;font-weight:400;white-space:pre;transform:scaleY(1.07);transform-origin:0 9.90px;">32,000</div>
<div style="position:absolute;left:331.20px;width:400px;text-align:right;top:506.70px;font-size:11.7px;line-height:1;color:#3c3c3c;font-weight:400;white-space:pre;transform:scaleY(1.07);transform-origin:0 9.90px;">41 405,00</div>
<div style="position:absolute;left:425.30px;width:400px;text-align:right;top:506.70px;font-size:11.7px;line-height:1;color:#3c3c3c;font-weight:400;white-space:pre;transform:scaleY(1.07);transform-origin:0 9.90px;">33 723,34</div>
<div style="position:absolute;left:519.40px;width:400px;text-align:right;top:506.70px;font-size:11.7px;line-height:1;color:#3c3c3c;font-weight:400;white-space:pre;transform:scaleY(1.07);transform-origin:0 9.90px;">1 293,91</div>
<div style="position:absolute;left:614.00px;width:400px;text-align:right;top:506.70px;font-size:11.7px;line-height:1;color:#3c3c3c;font-weight:400;white-space:pre;transform:scaleY(1.07);transform-origin:0 9.90px;">1 053,85</div>
<div style="position:absolute;left:16px;top:282.4px;width:1px;height:221.10000000000002px;background:#c8c8c8"></div>
<div style="position:absolute;left:26px;top:294.5px;width:1px;height:209.0px;background:#c8c8c8"></div>
<div style="position:absolute;left:37px;top:306.6px;width:1px;height:196.89999999999998px;background:#c8c8c8"></div>
<div style="position:absolute;left:48px;top:318.8px;width:1px;height:184.7px;background:#c8c8c8"></div>
<div style="position:absolute;left:59px;top:331.0px;width:1px;height:172.5px;background:#c8c8c8"></div>
<div style="position:absolute;left:12px;top:273.4px;width:9px;height:9px;box-sizing:border-box;border:1px solid #b9b9b9;border-radius:1.5px;background:#fff"></div>
<div style="position:absolute;left:14px;top:277.4px;width:5px;height:1.0px;background:#555"></div>
<div style="position:absolute;left:22px;top:285.5px;width:9px;height:9px;box-sizing:border-box;border:1px solid #b9b9b9;border-radius:1.5px;background:#fff"></div>
<div style="position:absolute;left:24px;top:289.5px;width:5px;height:1.0px;background:#555"></div>
<div style="position:absolute;left:33px;top:297.6px;width:9px;height:9px;box-sizing:border-box;border:1px solid #b9b9b9;border-radius:1.5px;background:#fff"></div>
<div style="position:absolute;left:35px;top:301.6px;width:5px;height:1.0px;background:#555"></div>
<div style="position:absolute;left:44px;top:309.8px;width:9px;height:9px;box-sizing:border-box;border:1px solid #b9b9b9;border-radius:1.5px;background:#fff"></div>
<div style="position:absolute;left:46px;top:313.8px;width:5px;height:1.0px;background:#555"></div>
<div style="position:absolute;left:55px;top:322.0px;width:9px;height:9px;box-sizing:border-box;border:1px solid #b9b9b9;border-radius:1.5px;background:#fff"></div>
<div style="position:absolute;left:57px;top:326.0px;width:5px;height:1.0px;background:#555"></div>
<div style="position:absolute;left:16px;top:503.3px;width:57px;height:1.0px;background:#c8c8c8"></div>
<div style="position:absolute;left:72.3px;top:262px;width:376px;height:72.5px;box-sizing:border-box;border:3px solid #90c81c;border-radius:3px"></div>
<div style="position:absolute;left:542px;top:222px;width:477.5px;height:48.5px;box-sizing:border-box;border:3px solid #90c81c;border-radius:3px"></div>
<div style="position:absolute;left:73.3px;top:334px;width:2.4000000000000057px;height:252px;background:#90c81c"></div>
<div style="position:absolute;left:543.8px;top:270px;width:2.300000000000068px;height:308.5px;background:#90c81c"></div>
<div style="position:absolute;left:73.00px;top:581.33px;font-size:19.1px;line-height:1;color:#1e1e1e;font-weight:400;white-space:pre;transform:scaleY(1.07);transform-origin:0 16.17px;">тут можно детализировать отчёт</div>
<div style="position:absolute;left:73.00px;top:604.03px;font-size:19.1px;line-height:1;color:#1e1e1e;font-weight:400;white-space:pre;transform:scaleY(1.07);transform-origin:0 16.17px;">до конкретного магазина в сети,</div>
<div style="position:absolute;left:73.00px;top:627.83px;font-size:19.1px;line-height:1;color:#1e1e1e;font-weight:400;white-space:pre;transform:scaleY(1.07);transform-origin:0 16.17px;">а дальше — до отдела в магазине</div>
<div style="position:absolute;left:73.00px;top:650.83px;font-size:19.1px;line-height:1;color:#1e1e1e;font-weight:400;white-space:pre;transform:scaleY(1.07);transform-origin:0 16.17px;">и продавца</div>
<div style="position:absolute;left:543.20px;top:575.83px;font-size:19.1px;line-height:1;color:#1e1e1e;font-weight:400;white-space:pre;transform:scaleY(1.07);transform-origin:0 16.17px;">в отчёте есть количество товаров,</div>
<div style="position:absolute;left:543.20px;top:598.23px;font-size:19.1px;line-height:1;color:#1e1e1e;font-weight:400;white-space:pre;transform:scaleY(1.07);transform-origin:0 16.17px;">суммы продаж со скидкой и без,</div>
<div style="position:absolute;left:543.20px;top:621.23px;font-size:19.1px;line-height:1;color:#1e1e1e;font-weight:400;white-space:pre;transform:scaleY(1.07);transform-origin:0 16.17px;">средняя стоимость покупки</div>
<div style="position:absolute;left:543.20px;top:644.73px;font-size:19.1px;line-height:1;color:#1e1e1e;font-weight:400;white-space:pre;transform:scaleY(1.07);transform-origin:0 16.17px;">со скидкой и без</div>
</body></html>
